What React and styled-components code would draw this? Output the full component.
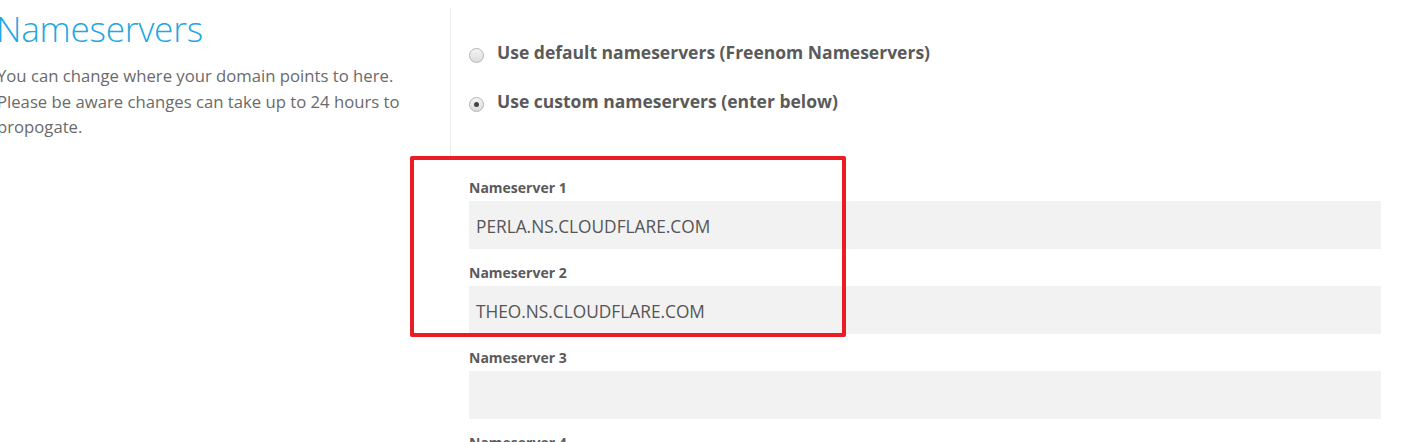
import styled, { createGlobalStyle } from 'styled-components';

const GlobalStyle = createGlobalStyle`
  html, body {
    margin: 0;
    padding: 0;
    background: #fff;
    font-family: 'Open Sans', 'Liberation Sans', sans-serif;
    overflow: hidden;
  }
  * {
    box-sizing: border-box;
  }
`;

const StyledPage = styled.div`
  position: relative;
  display: flex;
  align-items: flex-start;
  width: 1424px;
  height: 442px;
  overflow: hidden;
`;

const StyledIntro = styled.div`
  width: 453px;
  margin-left: -3px;
  flex-shrink: 0;
`;

const StyledTitle = styled.h1`
  margin: 0 0 0 -1px;
  padding-top: 4px;
  color: #1fa8e2;
  font-size: 35.3px;
  font-weight: 300;
  line-height: 48px;
  letter-spacing: -0.3px;
`;

const StyledIntroText = styled.p`
  margin: 11px 0 0;
  color: #6a6a6a;
  font-size: 16.7px;
  line-height: 25.5px;
  white-space: nowrap;
`;

const StyledDivider = styled.div`
  width: 1px;
  height: 150px;
  margin-top: 8px;
  background: #eee;
  flex-shrink: 0;
`;

const StyledSettings = styled.div`
  padding: 37px 0 0 18px;
  width: 930px;
`;

const StyledRadioRow = styled.label`
  display: flex;
  align-items: center;
  gap: 13px;
  height: 30px;
  margin-bottom: 19px;
  color: #5a5a5a;
  font-size: 17.5px;
  font-weight: 700;
  white-space: nowrap;
  cursor: pointer;
`;

const StyledRadio = styled.span`
  position: relative;
  width: 15px;
  height: 15px;
  margin-top: 6px;
  border-radius: 50%;
  border: 1px solid #b4b4b4;
  background: linear-gradient(#f4f4f4, #dcdcdc);
  flex-shrink: 0;

  &::after {
    content: '';
    display: ${(p) => (p.$checked ? 'block' : 'none')};
    position: absolute;
    top: 4px;
    left: 4px;
    width: 5px;
    height: 5px;
    border-radius: 50%;
    background: #444;
  }
`;

const StyledFields = styled.div`
  padding-top: 43px;
`;

const StyledField = styled.div`
  margin-bottom: 14px;
`;

const StyledFieldLabel = styled.div`
  color: #5a5a5a;
  font-size: 14px;
  font-weight: 700;
  line-height: 20px;
  margin-bottom: 3px;
`;

const StyledInput = styled.div`
  height: 48px;
  padding: 0 7px;
  background: #f2f2f2;
  color: #555;
  font-size: 17.3px;
  line-height: 52px;
  text-transform: uppercase;
`;

const StyledHighlight = styled.div`
  position: absolute;
  left: 410px;
  top: 156px;
  width: 436px;
  height: 181px;
  border: 4px solid #ec1c24;
  border-radius: 2px;
  pointer-events: none;
`;

const nameservers = [
  'perla.ns.cloudflare.com',
  'theo.ns.cloudflare.com',
  '',
  '',
];

const App = () => {
  return (
    <>
      <GlobalStyle />
      <StyledPage>
        <StyledIntro>
          <StyledTitle>Nameservers</StyledTitle>
          <StyledIntroText>
            You can change where your domain points to here.
            <br />
            Please be aware changes can take up to 24 hours to
            <br />
            propogate.
          </StyledIntroText>
        </StyledIntro>
        <StyledDivider />
        <StyledSettings>
          <StyledRadioRow>
            <StyledRadio />
            Use default nameservers (Freenom Nameservers)
          </StyledRadioRow>
          <StyledRadioRow>
            <StyledRadio $checked />
            Use custom nameservers (enter below)
          </StyledRadioRow>
          <StyledFields>
            {nameservers.map((ns, i) => (
              <StyledField key={i}>
                <StyledFieldLabel>Nameserver {i + 1}</StyledFieldLabel>
                <StyledInput>{ns}</StyledInput>
              </StyledField>
            ))}
          </StyledFields>
        </StyledSettings>
        <StyledHighlight />
      </StyledPage>
    </>
  );
};

export default App;
